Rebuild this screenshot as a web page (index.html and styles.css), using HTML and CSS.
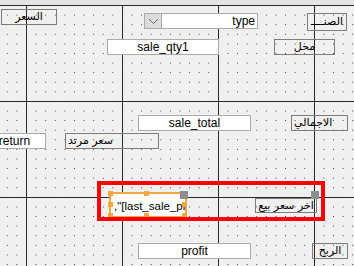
FILE: index.html
```html
<!DOCTYPE html>
<html lang="ar">
<head>
    <meta charset="UTF-8">
    <title>Form design</title>
    <link rel="stylesheet" href="styles.css">
</head>
<body>
    <div class="ruler"></div>
    <div id="canvas">
        <!-- row 1 -->
        <div class="lbl" id="lblPrice">السعر</div>
        <div class="combo" id="cboType">
            <span class="drop">
                <svg width="11" height="7" viewBox="0 0 11 7"><path d="M1 1 L5.5 5.5 L10 1" fill="none" stroke="#6d6d6d" stroke-width="1"/></svg>
            </span>
            <span class="combo-text">type</span>
        </div>
        <div class="lbl" id="lblType">الصنــــ</div>

        <!-- row 2 -->
        <div class="fld" id="txtQty">sale_qty1</div>
        <div class="lbl" id="lblShop">محل</div>

        <!-- row 3 -->
        <div class="fld" id="txtTotal">sale_total</div>
        <div class="lbl left" id="lblTotal">الاجمالي</div>

        <div class="fld" id="txtReturn">return</div>
        <div class="lbl left" id="lblReturn">سعر مرتد</div>

        <!-- selected control -->
        <div class="fld sel" id="txtLast">,"[last_sale_pr</div>
        <span class="hnd" style="left:108px;top:186px"></span>
        <span class="hnd" style="left:144px;top:186px"></span>
        <span class="hnd" style="left:108px;top:197px"></span>
        <span class="hnd" style="left:108px;top:208px"></span>
        <span class="hnd" style="left:144px;top:208px"></span>
        <span class="hnd" style="left:182px;top:197px"></span>
        <span class="hnd" style="left:182px;top:208px"></span>
        <span class="move" style="left:180px;top:186px"></span>
        <div class="lbl" id="lblLast">اخر سعر بيع</div>
        <span class="move" style="left:311px;top:186px"></span>

        <!-- row 4 -->
        <div class="fld" id="txtProfit">profit</div>
        <div class="lbl" id="lblProfit">الربح</div>

        <div class="mark"></div>
    </div>
</body>
</html>
```

FILE: styles.css
```css
body {
    margin: 0;
    width: 354px;
    height: 266px;
    overflow: hidden;
    background-color: #f0f0f0;
}
.ruler {
    height: 5px;
    background-color: #e4e4e6;
}
#canvas {
    position: relative;
    height: 261px;
    background-color: #f0f0f0;
    background-image:
        linear-gradient(to right, #2a2a2a 1px, transparent 1px),
        linear-gradient(to bottom, #2a2a2a 1px, transparent 1px),
        conic-gradient(at 1px 1px, transparent 75%, #3a3a3a 0);
    background-size: 96px 100%, 100% 96px, 9.6px 9.6px;
    background-position: 26px 0, 0 0, 26px 0;
}
.lbl,
.fld,
.combo {
    position: absolute;
    box-sizing: border-box;
    height: 16px;
    white-space: nowrap;
    overflow: hidden;
}
.lbl {
    border: 1px solid #7c7c7c;
    font: 11px "DejaVu Sans", sans-serif;
    line-height: 14px;
    text-align: center;
    color: #000;
}
.lbl.left {
    text-align: left;
    padding-left: 2px;
}
.fld {
    background-color: #fff;
    border: 1px solid #ababab;
    font: 12px "Liberation Sans", Arial, sans-serif;
    line-height: 14px;
    text-align: center;
    color: #000;
}
.combo {
    display: flex;
    background-color: #fff;
    border: 1px solid #ababab;
    font: 12px "Liberation Sans", Arial, sans-serif;
    line-height: 14px;
}
.drop {
    width: 16px;
    display: flex;
    align-items: center;
    justify-content: center;
    background-color: #dcdcdc;
    border-right: 1px solid #ababab;
}
.combo-text {
    flex: 1;
    text-align: right;
    padding-right: 2px;
}
#lblPrice { left: 1px; top: 4px; width: 56px; }
#cboType { left: 144px; top: 8px; width: 114px; }
#lblType { left: 307px; top: 8px; width: 40px; height: 18px; line-height: 16px; }
#txtQty { left: 107px; top: 34px; width: 112px; }
#lblShop { left: 274px; top: 34px; width: 61px; }
#txtTotal { left: 138px; top: 110px; width: 113px; }
#lblTotal { left: 291px; top: 110px; width: 57px; }
#txtReturn { left: -17px; top: 128px; width: 63px; }
#lblReturn { left: 65px; top: 128px; width: 94px; }
#lblLast { left: 255px; top: 193px; width: 62px; height: 15px; line-height: 13px; }
#txtProfit { left: 138px; top: 238px; width: 113px; }
#lblProfit { left: 312px; top: 238px; width: 36px; }
.sel {
    left: 109px;
    top: 187px;
    width: 78px;
    height: 26px;
    border: 2px solid #fba640;
    text-align: left;
    padding: 5px 0 0 3px;
    font-size: 11.5px;
    line-height: 14px;
}
.hnd {
    position: absolute;
    width: 5px;
    height: 5px;
    background-color: #fba640;
}
.move {
    position: absolute;
    width: 8px;
    height: 8px;
    background-color: #8d8d92;
}
.mark {
    position: absolute;
    left: 97px;
    top: 176px;
    width: 228px;
    height: 40px;
    box-sizing: border-box;
    border: 4px solid #ff0000;
    pointer-events: none;
}
```
